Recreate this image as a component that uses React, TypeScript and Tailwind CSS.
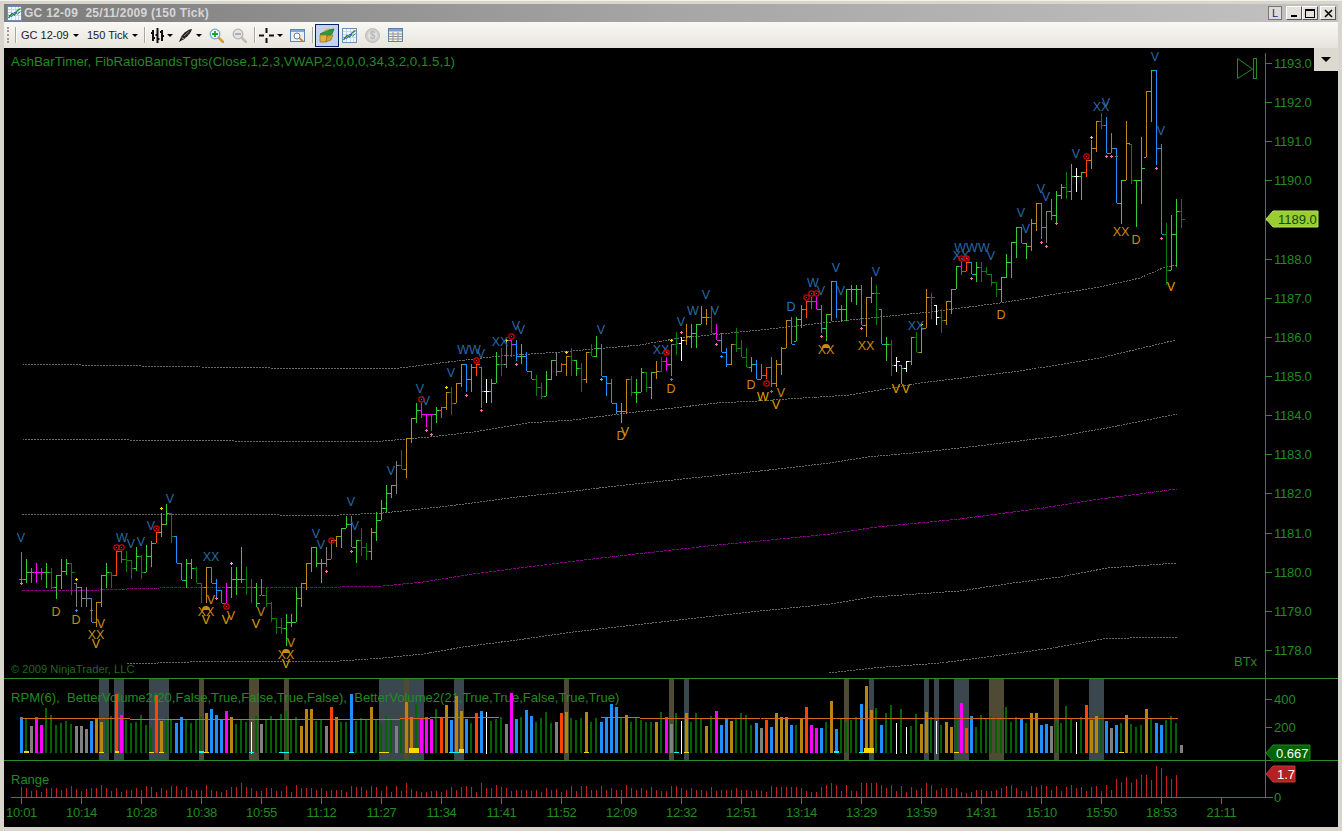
import React from "react";

const FONT = '"Liberation Sans", Arial, sans-serif';
const GREEN = "#228b22";
const LINE = "#2e8b2e";

const BAR: Record<string, string> = { B: "#1e90ff", G: "#32cd32", D: "#0b7d0b", O: "#bd8a1a", R: "#ff4500", M: "#ff00ff", A: "#808080", W: "#ffffff" };
const VOL: Record<string, string> = { B: "#1e90ff", D: "#006400", O: "#b8860b", R: "#ff4500", M: "#ff00ff", A: "#808080", W: "#ffffff" };

type Seg = { x0: number; y0: number; d: string };
const segs: Seg[] = [
  { x0: 21, y0: 500, d: "B 155 250 238;G 178 250 215;A 203 250 215;M 190 250 215;M 203 240 215;G 190 265 215;D 205 268 262;G 225 296 225;G 178 268 213;G 178 225 190;D 190 285 215;A 248 320 262;A 262 320 295;A 262 320 295;B 295 367 367;O 307 380 307;O 225 320 225;G 190 265 215;D 215 265 225;R 153 227 153;M 153 190 178;D 153 215 180;D 180 238 203;G 142 212 167;D 165 238 215;G 135 215 167;G 122 200 130;R 97 130 97;O 38 110 72;G 12 75 38;D 38 130 108;B 108 190 190;B 190 240 240;G 178 263 190;G 178 238 203;D 200 250 250;D 250 308 262;O 202 310 202;B 202 250 250;B 238 295 270;B 270 308 308;M 250 308 262;O 202 295 238;G 202 285 238;G 142 250 238;D 202 285 260;D 238 308 262;G 250 320 308;A 238 285 285;D 262 320 308;D 307 367 355;D 355 403 380;D 355 403 385;G 343 438 367;G 343 380 367;G 262 367 295;O 250 320 250;O 190 270 190;O 142 215 142;G 142 202 190;G 178 250 190;A 142 202 178;R 120 178 120;O 108 142 108" },
  { x0: 341, y0: 400, d: "G 385 443 385;G 348 385 373;B 348 442 442;G 420 490 420;D 385 467 442;D 430 480 454;O 385 480 397;G 337 422 361;G 300 361 325;G 255 337 280;G 255 293 255;A 183 282 196;D 150 208 208;O 115 233 115;O 55 128 55;G 10 68 31;M 10 55 43;M 43 80 43;M 43 92 43;G 22 68 31" },
  { x0: 441, y0: 300, d: "R 322 355 322;O 275 330 275;D 262 345 310;O 250 310 250;O 193 262 193;B 193 275 237;G 193 275 200;R 193 228 193;B 202 325 273;W 238 310 273;G 238 310 250;G 157 250 193;D 145 228 193;A 120 203 120;M 120 170 132;B 120 182 168;G 132 192 168;B 157 213 213;B 213 238 238;D 226 287 262;D 250 298 287;G 213 287 238;G 180 240 180;A 155 227 213;R 190 215 193;O 167 227 167;D 145 227 180;G 180 227 203;D 190 275 238;O 157 250 157;D 133 167 167;G 108 170 145;B 132 227 227;B 227 287 250;B 238 310 310;B 310 343 332;G 310 368 332;O 238 343 238;D 227 287 275;G 238 310 275;G 203 275 215;D 215 275 262;G 215 298 215;O 182 238 213;D 170 215 182;M 170 213 193;A 132 227 132;D 97 165 130" },
  { x0: 681, y0: 240, d: "W 290 362 300;O 252 315 288;G 252 325 278;G 252 325 252;G 197 252 232;O 208 255 232;D 197 278 278;M 252 300 300;B 278 337 337;B 325 382 372;O 312 375 312;D 265 337 325;D 300 350 350;D 325 382 382;G 350 395 372;B 360 418 418;A 372 418 405;R 382 418 382;B 350 442 430;O 360 442 372;O 322 405 325;O 240 325 240;B 232 313 313;G 232 302 238;O 195 265 208;R 183 233 183;M 170 208 183;M 170 208 208;B 195 278 265;G 222 302 222;O 124 243 124;B 124 233 208;G 195 245 208;G 148 243 148;G 135 185 148;G 135 195 148;B 135 255 255;O 172 290 172;O 110 190 160;D 135 255 160;B 208 313 313;G 290 362 313;D 300 408 375;W 350 395 362;G 375 432 385;W 362 395 362;G 290 375 290;D 275 337 337;O 265 340 265;O 148 265 172;D 160 238 172;W 195 255 232;D 208 278 240;O 183 255 183;O 148 222 148;G 78 148 78;M 67 105 92;R 67 92 67;B 67 103 103;G 67 125 80;D 67 125 92;D 80 103 103;D 103 137 125;D 125 172 148;G 112 185 112" },
  { x0: 1006, y0: 60, d: "G 583 653 607;G 547 653 547;G 502 595 502;B 502 548 548;G 548 597 559;O 478 572 490;O 430 512 430;B 430 537 502;A 453 548 453;A 417 480 466;G 393 490 405;G 372 418 382;D 335 418 393;G 312 420 348;W 324 395 348;G 337 420 337;R 300 350 300;O 240 327 265;O 183 277 183;D 160 208 196;B 172 278 278;A 219 278 265;B 265 430 430;G 360 492 360;O 183 360 250;D 253 373 360;G 360 502 360;G 232 432 325;O 92 290 92;G 30 185 30;B 30 314 265;B 252 523 523;D 490 675 630;G 466 630 523;G 418 620 454;D 418 503 478" },
];
const bars = segs.flatMap((s) =>
  s.d.split(";").map((r, i) => {
    const [c, h, l, k] = r.split(" ");
    return { x: s.x0 + i * 5, c: BAR[c], h: Math.round(s.y0 + +h / 3), l: Math.round(s.y0 + +l / 3), k: Math.round(s.y0 + +k / 3) };
  })
);

const volData =
  "B126 D130 A153 M126 M150 D99 D120 D150 D145 D138 D147 A153 A153 A162 B138 O133 O140 D125 D123 R57 M120 D135 D144 D142 D120 D150 D160 R60 O138 D125 D135 B144 B126 D135 D144 D132 D125 O114 B102 B120 B135 M108 O126 D147 D132 D141 W140 D123 A147 D132 D123 D132 D117 D108 D135 D126 O153 O102 O102 D138 D132 A153 R96 O126 " +
  "D141 D141 B57 D138 D129 D135 O96 D132 D144 D123 D135 A153 D135 O81 O126 D87 M129 M126 M132 D102 R127 O90 B135 O63 O108 B132 D144 R114 B108 W111 D137 D132 D126 A147 M54 B132 D126 B105 B123 D141 D129 D111 D144 A141 R114 O111 D129 D135 D129 O111 D141 D129 B141 B126 B87 B96 D129 O120 D141 D129 D135 D141 D141 O141 D111 M126 A147 D114 " +
  "W138 O114 D141 D114 D132 O153 D123 M108 B150 B129 O138 D129 D114 D120 D150 B144 A159 R135 B156 O114 O126 O126 B150 D150 O132 R96 M150 M159 B159 D141 O78 B162 D129 D141 D135 D126 B87 O33 O105 D99 B150 D114 D90 W144 D102 W156 D153 D117 O147 O111 D126 W138 D150 O141 O156 D126 M84 R159 B123 D156 D120 D129 D123 D126 D135 " +
  "D96 D141 D126 B129 D144 O114 O114 B150 B147 A153 D138 D144 D93 D129 W141 D126 R90 O135 O123 D120 B138 A159 B150 D144 O120 D147 D156 D150 O102 D132 B144 B150 D135 D123 D144 A210";
const vols = volData.split(" ").map((t, i) => {
  const c = t[0];
  const y = Math.round(675 + +t.slice(1) / 3);
  const w = c === "D" ? 2 : c === "W" ? 1 : 3;
  return { x: c === "W" ? 21 + i * 5 : 20 + i * 5, y, w, c: VOL[c], end: c === "W" ? 754 : 753 };
});

const rangeData =
  "337 340 347 345 352 339 339 340 345 340 333 342 347 343 340 339 330 340 347 340 352 346 346 338 345 334 337 352 340 345 334 334 346 336 346 345 345 330 345 349 352 346 335 335 324 337 340 347 349 339 340 349 347 334 350 330 338 338 340 345 340 347 346 345 " +
  "345 352 334 337 337 344 334 335 347 332 352 334 349 324 343 347 352 351 348 349 351 345 337 344 337 334 337 351 324 339 339 331 337 340 348 346 346 346 348 346 352 339 346 342 352 346 334 348 334 333 345 346 334 346 340 345 346 330 339 344 340 344 336 345 348 349 334 333 " +
  "339 345 339 345 345 348 336 348 345 345 345 339 345 345 348 345 348 351 333 336 336 336 336 336 339 348 351 351 336 330 324 330 348 330 348 348 324 324 324 324 330 339 330 348 333 351 336 345 339 324 330 345 339 339 339 339 351 354 351 345 345 348 348 345 339 333 330 339 " +
  "348 348 333 336 330 333 345 333 348 336 330 339 336 348 336 333 348 330 345 312 321 306 324 312 300 300 315 273 279 303 312 300";
const ranges = rangeData.split(" ").map((t, i) => ({ x: 21 + i * 5, y: Math.round(675 + +t / 3) }));

const bands: [number, number, number, number][] = [
  [99, 109, 0, 0], [114, 124, 0, 0], [149, 169, 0, 0], [199, 204, 1, 0], [249, 259, 1, 0], [284, 289, 1, 0],
  [379, 424, 0, 0], [404, 409, 1, 0], [454, 464, 0, 0], [564, 569, 1, 0], [669, 674, 1, 0], [684, 689, 0, 0],
  [844, 849, 1, 0], [869, 874, 0, 0], [924, 929, 0, 0], [934, 939, 0, 0], [954, 969, 0, 0], [989, 1004, 1, 0],
  [1054, 1059, 1, 0], [1089, 1104, 0, 0],
];

const dots: [number, number, number, string][] = [
  [24, 751, 5, "#ffd700"], [99, 752, 5, "#ffd700"], [115, 751, 4, "#ffd700"], [149, 752, 5, "#ffd700"], [159, 752, 5, "#ffd700"],
  [199, 751, 5, "#00ffff"], [204, 752, 5, "#ffd700"], [249, 752, 5, "#00ffff"], [279, 752, 10, "#00ffff"],
  [349, 752, 5, "#00ffff"], [379, 752, 10, "#ffd700"], [409, 748, 10, "#ffd700"], [449, 752, 10, "#00ffff"], [459, 749, 5, "#ffd700"],
  [584, 752, 5, "#ffd700"], [674, 752, 5, "#00ffff"], [684, 752, 5, "#ffd700"], [834, 751, 5, "#00ffff"], [859, 752, 5, "#00ffff"],
  [864, 748, 10, "#ffd700"], [954, 752, 5, "#ffd700"], [1119, 752, 5, "#ffd700"],
];

const lines: { p: number[]; c: string; dash: string }[] = [
  { c: "#666666", dash: "2 1", p: [22, 364, 200, 367, 340, 369, 400, 368, 440, 363, 500, 356, 560, 352, 640, 345, 680, 338, 760, 330, 850, 320, 930, 312, 1000, 303, 1100, 287, 1140, 278, 1165, 267, 1176, 265] },
  { c: "#666666", dash: "2 1", p: [22, 439, 340, 442, 383, 441, 430, 437, 473, 432, 527, 423, 573, 420, 627, 413, 673, 408, 717, 403, 757, 401, 850, 395, 920, 383, 1020, 371, 1100, 358, 1176, 340] },
  { c: "#666666", dash: "2 1", p: [22, 515, 267, 514, 280, 515, 340, 515, 383, 513, 440, 507, 480, 502, 517, 497, 567, 492, 607, 487, 673, 480, 760, 471, 830, 463, 867, 457, 913, 453, 960, 448, 1003, 443, 1060, 436, 1107, 428, 1177, 414] },
  { c: "#8b008b", dash: "3 1", p: [22, 591, 100, 590, 127, 589, 160, 588, 340, 587, 383, 586, 423, 582, 473, 574, 527, 567, 567, 562, 627, 555, 717, 545, 760, 541, 830, 534, 877, 527, 960, 519, 1043, 508, 1093, 500, 1177, 489] },
  { c: "#666666", dash: "2 1", p: [127, 664, 190, 662, 340, 661, 383, 658, 423, 654, 463, 647, 517, 640, 573, 632, 617, 627, 687, 619, 760, 611, 830, 604, 873, 597, 960, 591, 1013, 583, 1060, 577, 1107, 568, 1177, 563] },
  { c: "#666666", dash: "2 1", p: [829, 673, 873, 668, 940, 663, 987, 657, 1053, 648, 1103, 639, 1157, 637, 1177, 638] },
];

const BL = "#2a69a6";
const GD = "#cc8a14";
const labels: [string, number, number, string][] = [
  ["V", 21, 537, BL], ["V", 151, 525, BL], ["W", 122, 537, BL], ["V", 131, 543, BL], ["V", 141, 541, BL], ["XX", 211, 556, BL], ["V", 316, 533, BL], ["V", 321, 544, BL], ["V", 170, 498, BL],
  ["V", 351, 501, BL], ["V", 355, 525, BL], ["V", 391, 470, BL], ["V", 420, 388, BL], ["V", 426, 400, BL], ["V", 451, 372, BL], ["WW", 469, 349, BL], ["V", 481, 353, BL], ["XX", 500, 341, BL], ["V", 516, 325, BL], ["V", 521, 329, BL], ["V", 601, 329, BL], ["XX", 661, 349, BL],
  ["V", 681, 321, BL], ["V", 706, 294, BL], ["W", 693, 310, BL], ["V", 715, 310, BL], ["W", 813, 282, BL], ["V", 821, 290, BL], ["D", 791, 306, "#1e78d2"], ["V", 836, 267, BL], ["V", 841, 290, BL], ["V", 876, 271, BL], ["XX", 916, 325, BL], ["XX", 961, 255, BL], ["WWW", 972, 247, BL], ["V", 991, 255, BL],
  ["V", 1021, 212, BL], ["V", 1026, 228, BL], ["V", 1041, 188, BL], ["V", 1046, 196, BL], ["V", 1076, 153, BL], ["XX", 1101, 106, BL], ["V", 1106, 102, BL], ["V", 1161, 130, BL], ["V", 1155, 56, BL],
  ["D", 56, 611, GD], ["D", 76, 619, GD], ["V", 101, 623, GD], ["XX", 96, 634, GD], ["V", 96, 643, "#e0a000"], ["V", 211, 599, GD], ["XX", 206, 611, GD], ["V", 206, 619, "#e0a000"], ["V", 226, 619, "#e0a000"], ["V", 231, 615, GD], ["V", 261, 611, GD], ["V", 256, 623, "#e0a000"], ["V", 291, 642, GD], ["XX", 286, 654, GD], ["V", 286, 663, "#e0a000"],
  ["D", 621, 435, GD], ["V", 625, 431, "#c8a000"], ["D", 671, 388, GD], ["D", 751, 384, GD], ["W", 763, 396, "#e0a000"], ["V", 781, 392, GD], ["V", 776, 404, "#e0a000"], ["XX", 826, 349, GD], ["XX", 866, 345, GD], ["V", 896, 388, "#e0a000"], ["V", 906, 388, "#e0a000"], ["D", 1001, 314, GD],
  ["XX", 1121, 231, GD], ["D", 1136, 239, GD], ["V", 1171, 286, "#e0a000"],
];
const domes: [number, number][] = [[206, 610], [286, 653], [826, 348]];
const targets: [number, number][] = [[116, 547], [121, 547], [156, 528], [226, 606], [331, 540], [421, 399], [476, 360], [511, 336], [666, 352], [806, 297], [811, 293], [816, 293], [766, 383], [961, 258], [966, 258], [1086, 156]];
const P = "#ff69b4";
const Y = "#ffd700";
const S = "#1e90ff";
const crosses: [number, number, string][] = [
  [21, 583, P], [76, 579, Y], [76, 610, S], [161, 508, Y], [216, 598, P], [231, 563, Y], [326, 571, P], [91, 610, "#808080"],
  [351, 551, P], [426, 430, P], [431, 434, P], [481, 410, P], [446, 387, Y], [466, 395, P], [506, 340, Y], [516, 364, P], [566, 352, Y], [601, 379, P], [671, 340, Y], [671, 379, S],
  [681, 332, P], [716, 344, P], [721, 356, S], [771, 391, S], [821, 336, P], [861, 328, P], [921, 324, Y], [971, 278, P],
  [1041, 242, P], [1046, 246, P], [1056, 223, P], [1091, 137, Y], [1106, 156, P], [1111, 156, P], [1116, 156, "#2e8b8b"], [1156, 168, P], [1161, 238, P],
];

const prices = Array.from({ length: 16 }, (_, i) => ({ y: Math.round(63 + i * 39.13), t: (1193 - i).toFixed(1) }));
const times = ["10:01", "10:14", "10:28", "10:38", "10:55", "11:12", "11:27", "11:34", "11:41", "11:52", "12:09", "12:32", "12:51", "13:14", "13:29", "13:59", "14:31", "15:10", "15:50", "18:53", "21:11"];

function Caret() {
  return <div className="w-0 h-0 border-l-[3px] border-r-[3px] border-t-[3px] border-l-transparent border-r-transparent border-t-black" />;
}
function Sep({ className }: { className: string }) {
  return <div className={`w-[2px] h-[16px] border-l border-[#a9a89f] bg-white/80 ${className}`} />;
}
function ChartIcon() {
  return (
    <svg width="15" height="15" viewBox="0 0 15 15">
      <rect x="0.5" y="0.5" width="14" height="14" fill="#f4f8ff" stroke="#6f8fb8" />
      <path d="M1 3.5H14M1 6.5H14M1 9.5H14M4.5 1V14M8.5 1V14M11.5 1V14" stroke="#c9d6e6" strokeWidth="1" />
      <path d="M1.5 12L5 7.5L7.5 9L10 5L13.5 2.5" stroke="#2c8a3d" strokeWidth="1.4" fill="none" />
      <path d="M1.5 9L5 10.5L8 6L10.5 8L13.5 5.5" stroke="#2f62c8" strokeWidth="1" fill="none" />
    </svg>
  );
}
function Magnifier({ sign, gray }: { sign: "+" | "-"; gray?: boolean }) {
  const ring = gray ? "#b4b4b4" : "#7fa7c9";
  const mark = gray ? "#a8a8a8" : "#23a030";
  return (
    <svg width="15" height="15" viewBox="0 0 15 15">
      <path d="M9 9L14 14" stroke={gray ? "#bdbdbd" : "#d89a3a"} strokeWidth="2.6" strokeLinecap="round" />
      <circle cx="6" cy="6" r="4.8" fill={gray ? "#e4e4e4" : "#eef7fb"} stroke={ring} strokeWidth="1.3" />
      <path d={sign === "+" ? "M3 6H9M6 3V9" : "M3 6H9"} stroke={mark} strokeWidth="1.8" />
    </svg>
  );
}

function Panel({ y, h, children }: { y: number; h: number; children: React.ReactNode }) {
  return (
    <svg width={1334} height={h} viewBox={`4 ${y} 1334 ${h}`} className="block shrink-0 overflow-visible" fontFamily={FONT}>
      {children}
    </svg>
  );
}

function AxisLine({ y1, y2 }: { y1: number; y2: number }) {
  return <line x1={1265.5} x2={1265.5} y1={y1} y2={y2} stroke={LINE} shapeRendering="crispEdges" />;
}

function Tag({ x2, y, label, fill, text, tx, edge }: { x2: number; y: number; label: string; fill: string; text: string; tx: number; edge: string }) {
  return (
    <g>
      <polygon points={`1266,${y} 1273,${y - 8} ${x2},${y - 8} ${x2},${y + 8} 1273,${y + 8}`} fill={fill} stroke={edge} />
      <text x={tx} y={y + 5} fontSize="13" fill={text}>{label}</text>
    </g>
  );
}

export default function App() {
  return (
    <div className="w-[1342px] h-[831px] overflow-hidden bg-[#d8d5cc] flex flex-col pt-[3px] px-[4px] border-t border-[#f2f0ea]" style={{ fontFamily: FONT }}>
      {/* title bar */}
      <div className="h-[18px] shrink-0 flex items-center bg-linear-to-r from-[#7c7c7c] via-[#a6a6a6] to-[#c2c2c2]">
        <div className="ml-[3px]"><ChartIcon /></div>
        <div className="ml-[2px] text-[12px] font-bold text-[#d6d6d6] whitespace-pre tracking-[0.27px]">GC 12-09  25/11/2009 (150 Tick)</div>
        <div className="ml-auto flex items-center mr-[2px]">
          <div className="w-[14px] h-[14px] bg-[#dcdad2] border border-[#777] text-[11px] leading-[12px] text-center text-[#102a80]">L</div>
          <div className="ml-[4px] w-[16px] h-[14px] bg-[#e4e2da] border border-[#555] border-t-white border-l-white flex items-end justify-center pb-[2px]"><div className="w-[6px] h-[2px] bg-black" /></div>
          <div className="w-[16px] h-[14px] bg-[#e4e2da] border border-[#555] border-t-white border-l-white flex items-center justify-center"><div className="w-[10px] h-[9px] border border-black border-t-2" /></div>
          <div className="ml-[2px] w-[16px] h-[14px] bg-[#e4e2da] border border-[#555] border-t-white border-l-white flex items-center justify-center">
            <svg width="9" height="9" viewBox="0 0 9 9"><path d="M1 1L8 8M8 1L1 8" stroke="#000" strokeWidth="1.6" /></svg>
          </div>
        </div>
      </div>
      {/* toolbar */}
      <div className="h-[26px] shrink-0 flex items-center bg-linear-to-b from-[#f9f8f4] to-[#e6e4dc] text-[11px] text-[#1b1b1b]">
        <div className="ml-[3px] w-[2px] h-[16px] border-l-2 border-dotted border-[#9c9c94]" />
        <Sep className="ml-[6px]" />
        <div className="ml-[4px] w-[46px] whitespace-nowrap">GC 12-09</div>
        <div className="ml-[6px]"><Caret /></div>
        <div className="ml-[8px] w-[39px] whitespace-nowrap">150 Tick</div>
        <div className="ml-[6px]"><Caret /></div>
        <Sep className="ml-[6px]" />
        <div className="ml-[5px]">
          <svg width="13" height="15" viewBox="0 0 13 15"><path d="M2 2V13M6.5 0V15M11 2V13M0 5H2M2 10H4M4.5 7H6.5M6.5 11H8.5M9 4H11M11 8H13" stroke="#111" strokeWidth="2" /></svg>
        </div>
        <div className="ml-[3px]"><Caret /></div>
        <div className="ml-[5px]">
          <svg width="15" height="15" viewBox="0 0 15 15"><path d="M14 1C11 1 6 4 3 9L1 14L5.5 11.5C9 9 13 5 14 1Z" fill="#222" /><path d="M4 9.5L5.5 11" stroke="#ddd" strokeWidth="1" /><path d="M6 8L11 3.5" stroke="#888" strokeWidth="1" /></svg>
        </div>
        <div className="ml-[3px]"><Caret /></div>
        <div className="ml-[7px]"><Magnifier sign="+" /></div>
        <div className="ml-[8px]"><Magnifier sign="-" gray /></div>
        <Sep className="ml-[7px]" />
        <div className="ml-[3px]">
          <svg width="15" height="15" viewBox="0 0 15 15"><path d="M7.5 0V5M7.5 10V15M0 7.5H5M10 7.5H15" stroke="#111" strokeWidth="2" /></svg>
        </div>
        <div className="ml-[3px]"><Caret /></div>
        <div className="ml-[7px]">
          <svg width="15" height="15" viewBox="0 0 15 15"><rect x="0.5" y="1.5" width="14" height="12" fill="#eaf1fa" stroke="#5f86b3" /><rect x="1" y="2" width="13" height="2" fill="#7ea6d6" /><circle cx="7" cy="8" r="3" fill="#fff" stroke="#6a7d96" /><path d="M9.5 10L13 13.5" stroke="#c88a30" strokeWidth="2" /></svg>
        </div>
        <Sep className="ml-[7px]" />
        <div className="ml-[1px] w-[24px] h-[23px] flex items-center justify-center bg-[#c4d4ec] border border-[#0a246a]">
          <svg width="16" height="16" viewBox="0 0 16 16"><path d="M1 7L9 3L15 2L13 7L5 10Z" fill="#2e9a3c" stroke="#16641f" strokeWidth="0.7" /><path d="M1 8H8L7 15H1Z" fill="#e0b040" stroke="#9a7414" strokeWidth="0.7" /><path d="M8 9L14 8L12 13L7 15Z" fill="#cda034" stroke="#9a7414" strokeWidth="0.7" /><path d="M5 4L10 2" stroke="#d8b248" strokeWidth="1.4" /></svg>
        </div>
        <div className="ml-[3px]"><ChartIcon /></div>
        <div className="ml-[8px]">
          <svg width="15" height="15" viewBox="0 0 15 15"><circle cx="7.5" cy="7.5" r="7" fill="#cfcfcf" stroke="#bdbdbd" /><circle cx="7.5" cy="7.5" r="4.6" fill="#e2e2e2" /><text x="7.5" y="11" fontSize="10" fontWeight="bold" textAnchor="middle" fill="#b8b8b8">$</text></svg>
        </div>
        <div className="ml-[8px]">
          <svg width="15" height="14" viewBox="0 0 15 14"><rect x="0.5" y="0.5" width="14" height="13" fill="#f7f2d8" stroke="#5f7fa8" /><rect x="1" y="1" width="13" height="2.5" fill="#7fa2cc" /><path d="M1 6H14M1 8.5H14M1 11H14M5 4V13M10 4V13" stroke="#8b95a2" strokeWidth="1" /></svg>
        </div>
      </div>
      {/* chart */}
      <div className="flex flex-col bg-black h-[779px] shrink-0 relative">
        <Panel y={48} h={630}>
          {lines.map((l, i) => (
            <polyline key={i} points={l.p.join(",")} fill="none" stroke={l.c} strokeDasharray={l.dash} shapeRendering="crispEdges" />
          ))}
          <g shapeRendering="crispEdges">
            {bars.map((b, i) => {
              const prev = i ? bars[i - 1].k : b.k;
              const o = Math.min(b.l, Math.max(b.h, prev));
              return (
                <g key={i} stroke={b.c}>
                  <line x1={b.x + 0.5} x2={b.x + 0.5} y1={b.h} y2={b.l} />
                  <line x1={b.x - 2} x2={b.x} y1={o + 0.5} y2={o + 0.5} />
                  <line x1={b.x + 1} x2={b.x + 4} y1={b.k + 0.5} y2={b.k + 0.5} />
                </g>
              );
            })}
            {crosses.map(([x, y, c], i) => (
              <path key={i} d={`M${x - 1} ${y + 0.5}H${x + 2}M${x + 0.5} ${y - 1}V${y + 2}`} stroke={c} />
            ))}
          </g>
          {domes.map(([x, y], i) => (
            <path key={i} d={`M${x - 4} ${y}A4 4 0 0 1 ${x + 4} ${y}Z`} fill="#cc8a14" />
          ))}
          {labels.map(([t, x, y, c], i) => (
            <text key={i} x={x} y={y + 4.5} fontSize="12.5" textAnchor="middle" fill={c}>{t}</text>
          ))}
          {targets.map(([x, y], i) => (
            <g key={i}>
              <circle cx={x + 0.5} cy={y + 0.5} r="2.7" fill="none" stroke="#cc0000" strokeWidth="1.2" />
              <rect x={x} y={y} width="1" height="1" fill="#ff2a2a" />
            </g>
          ))}
          <text x="11" y="66" fontSize="13.33" fill={GREEN}>AshBarTimer, FibRatioBandsTgts(Close,1,2,3,VWAP,2,0,0,0,34,3,2,0,1.5,1)</text>
          <text x="11" y="673" fontSize="11.2" fill="#1e6b1e">© 2009 NinjaTrader, LLC</text>
          <text x="1234" y="666" fontSize="13" fill={GREEN}>BTx</text>
          <g fill="none" stroke={GREEN}>
            <polygon points="1237.5,58.5 1252.5,69 1237.5,78.5" />
            <rect x="1253.5" y="58.5" width="3" height="20" />
          </g>
          <AxisLine y1={53} y2={678} />
          {prices.map((p) => (
            <g key={p.t}>
              <line x1="1266" x2="1272" y1={p.y + 0.5} y2={p.y + 0.5} stroke={LINE} shapeRendering="crispEdges" />
              {p.t !== "1189.0" && <text x="1274" y={p.y + 5} fontSize="13" fill={GREEN} letterSpacing="-0.2">{p.t}</text>}
            </g>
          ))}
          <Tag x2={1318} y={219} label="1189.0" fill="#9acd32" text="#0b4a0b" tx={1278} edge="#b6e05a" />
          <rect x="1314" y="48" width="24" height="23" fill="#dcd9d0" />
          <polygon points="1321,57 1331,57 1326,62" fill="#000" />
        </Panel>
        <Panel y={678} h={82}>
          {bands.map(([a, b, k], i) => (
            <rect key={i} x={a} y={678} width={b - a} height={82} fill={k ? "#4f4a33" : "#3a474f"} />
          ))}
          <text x="11" y="702" fontSize="13.1" fill={GREEN} xmlSpace="preserve">RPM(6),  BetterVolume2(20,False,True,False,True,False),  BetterVolume2(21,True,True,False,True,True)</text>
          <g shapeRendering="crispEdges">
            {vols.map((v, i) => (
              <rect key={i} x={v.x} y={v.y} width={v.w} height={v.end - v.y} fill={v.c} />
            ))}
            {dots.map(([x, y, w, c], i) => (
              <rect key={i} x={x} y={y} width={w} height={753 - y} fill={c} />
            ))}
          </g>
          <polyline
            points="21,718 130,719 400,719 430,718 500,717 600,717 640,718 760,718 800,719 1000,718 1100,718 1178,719"
            fill="none"
            stroke="#d2691e"
            shapeRendering="crispEdges"
          />
          <rect x="4" y="678" width="1334" height="1" fill={LINE} />
          <AxisLine y1={678} y2={760} />
          {[["400", 699], ["200", 727]].map(([t, y]) => (
            <g key={t as string}>
              <line x1="1266" x2="1272" y1={(y as number) + 0.5} y2={(y as number) + 0.5} stroke={LINE} shapeRendering="crispEdges" />
              <text x="1274" y={(y as number) + 5} fontSize="13" fill={GREEN}>{t}</text>
            </g>
          ))}
        </Panel>
        <Panel y={760} h={37}>
          <rect x="4" y="760" width="1334" height="1" fill={LINE} />
          <AxisLine y1={760} y2={797} />
          <Tag x2={1310} y={753} label="0.667" fill="#006400" text="#ffffff" tx={1276} edge="#1c8a1c" />
          <text x="11" y="784" fontSize="13" fill={GREEN}>Range</text>
          <g shapeRendering="crispEdges">
            {ranges.map((r, i) => (
              <rect key={i} x={r.x} y={r.y} width="1" height={797 - r.y} fill="#c21f1f" />
            ))}
          </g>
          <Tag x2={1295} y={774} label="1.7" fill="#b22222" text="#ffffff" tx={1277} edge="#c43a3a" />
        </Panel>
        <Panel y={797} h={30}>
          <rect x="11" y="797" width="1262" height="1" fill={LINE} />
          <text x="1274" y="802" fontSize="13" fill={GREEN}>0</text>
          {times.map((t, i) => (
            <g key={t}>
              <rect x={21 + i * 60} y="798" width="1" height="6" fill={LINE} />
              <text x={21.5 + i * 60} y="817" fontSize="13" textAnchor="middle" fill={GREEN} letterSpacing="-0.3">{t}</text>
            </g>
          ))}
        </Panel>
      </div>
    </div>
  );
}
